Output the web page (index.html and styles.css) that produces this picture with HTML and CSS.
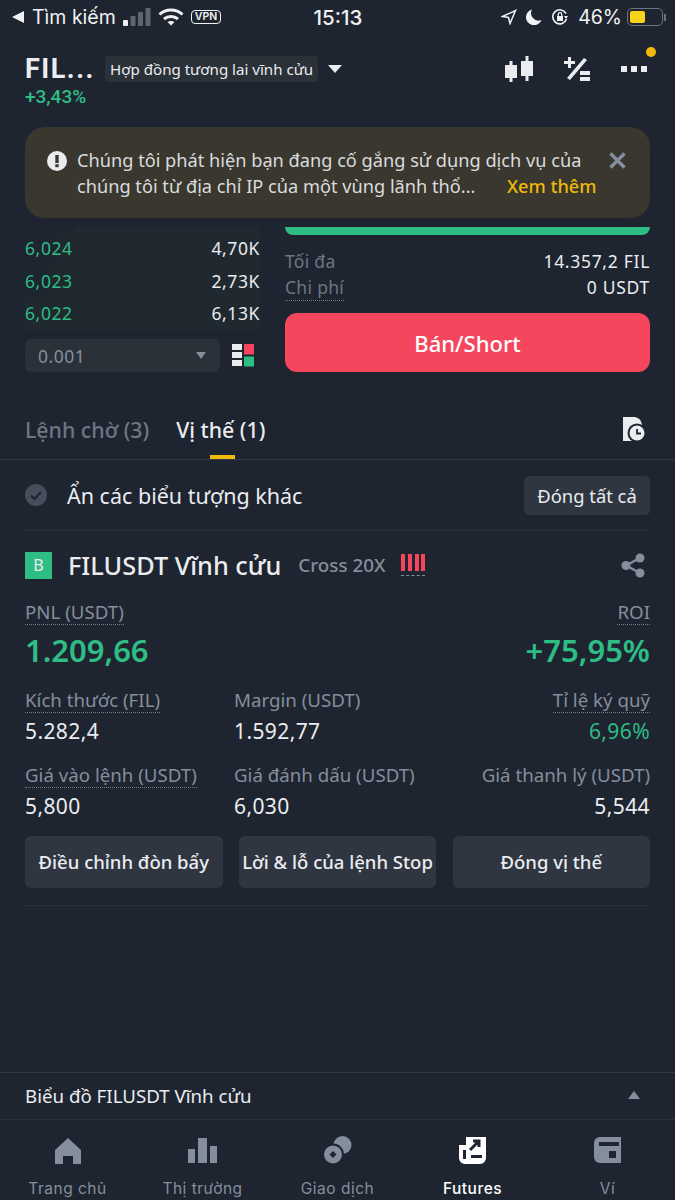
FILE: index.html
```html
<!DOCTYPE html>
<html lang="vi">
<head>
  <meta charset="UTF-8">
  <meta name="viewport" content="width=device-width, initial-scale=1.0">
  <title>Futures</title>
  <link rel="stylesheet" href="styles.css">
</head>
<body>
  <div class="app">
    <!-- status bar -->
    <div class="status-bar">
      <div class="status-left">
        <svg class="back-tri" width="13" height="12" viewBox="0 0 13 12"><path d="M0 6L12 0V12Z" fill="#f0f1f3"/></svg>
        <span>Tìm kiếm</span>
        <svg class="signal" width="28" height="18" viewBox="0 0 28 18">
          <rect x="0" y="12" width="5" height="6" rx="1" fill="#f0f1f3"/>
          <rect x="7.500" y="8" width="5" height="10" rx="1" fill="#5f6570"/>
          <rect x="15" y="4" width="5" height="14" rx="1" fill="#5f6570"/>
          <rect x="22.500" y="0" width="5" height="18" rx="1" fill="#5f6570"/>
        </svg>
        <svg class="wifi" width="26" height="18" viewBox="0 0 26 18" fill="none" stroke="#f0f1f3" stroke-width="3">
          <path d="M1.500 6.500C8 .5 18 .5 24.500 6.500"/>
          <path d="M6 11c4-3.500 10-3.500 14 0"/>
          <path d="M13 17.500L9.500 14c2-1.500 5-1.500 7 0Z" fill="#f0f1f3" stroke="none"/>
        </svg>
        <span class="vpn">VPN</span>
      </div>
      <div class="status-time">15:13</div>
      <div class="status-right">
        <svg width="16" height="16" viewBox="0 0 16 16" fill="none" stroke="#f0f1f3" stroke-width="1.500"><path d="M1.500 7.500L14.500 1.500L9 14.500L7.500 8.500Z"/></svg>
        <svg class="moon" width="16" height="16" viewBox="0 0 16 16"><path d="M6 0.500A8 8 0 1 0 15.500 11A7.500 7.500 0 0 1 6 0.500Z" fill="#f0f1f3"/></svg>
        <svg width="18" height="18" viewBox="0 0 18 18" fill="none" stroke="#f0f1f3" stroke-width="1.600">
          <path d="M15.500 11A7 7 0 1 1 15 5.500"/>
          <path d="M13 8h4l-2 3Z" fill="#f0f1f3" stroke="none"/>
          <rect x="6" y="8" width="6" height="5" fill="#f0f1f3" stroke="none"/>
          <path d="M7.200 8V6.500a1.800 1.800 0 0 1 3.600 0V8" stroke-width="1.200"/>
        </svg>
        <span class="batt-text">46%</span>
        <div class="battery"><div class="battery-fill"></div></div>
        <div class="battery-cap"></div>
      </div>
    </div>

    <!-- top bar -->
    <div class="top-bar">
      <div class="top-left">
        <div class="title-row">
          <span class="symbol">FIL...</span>
          <span class="contract-tag">Hợp đồng tương lai vĩnh cửu</span>
          <span class="caret-down"></span>
        </div>
        <div class="change">+3,43%</div>
      </div>
      <div class="top-icons">
        <svg width="28" height="26" viewBox="0 0 28 26" fill="#eaecef">
          <rect x="0" y="9" width="12" height="13"/><rect x="4.500" y="5" width="3" height="21"/>
          <rect x="16" y="5" width="12" height="15"/><rect x="20.500" y="0" width="3" height="25"/>
        </svg>
        <svg width="26" height="26" viewBox="0 0 26 26" fill="#eaecef">
          <path d="M4 1h3v4h4v3H7v4H4V8H0V5h4Z"/>
          <path d="M20 2l3 2L6 24l-3-2Z"/>
          <rect x="16" y="15" width="10" height="4"/><rect x="16" y="21" width="10" height="4"/>
        </svg>
        <div class="more">
          <span class="dot-yellow"></span>
          <span class="sq"></span><span class="sq"></span><span class="sq"></span>
        </div>
      </div>
    </div>

    <!-- part of the order form that shows below the notice -->
    <div class="trade-area">
      <div class="notice">
        <svg class="notice-icon" width="20" height="20" viewBox="0 0 20 20">
          <circle cx="10" cy="10" r="10" fill="#eaecef"/>
          <rect x="8.300" y="4" width="3.400" height="8" fill="#3a372e"/>
          <rect x="8.300" y="13.200" width="3.400" height="3" fill="#3a372e"/>
        </svg>
        <div class="notice-text">
          <div>Chúng tôi phát hiện bạn đang cố gắng sử dụng dịch vụ của</div>
          <div class="notice-line2">chúng tôi từ địa chỉ IP của một vùng lãnh thổ...<a class="more-link">Xem thêm</a></div>
        </div>
        <svg class="notice-close" width="17" height="17" viewBox="0 0 17 17" stroke="#848e9c" stroke-width="3.400"><path d="M1.500 1.500L15.500 15.500M15.500 1.500L1.500 15.500"/></svg>
      </div>

      <div class="trade-cols">
        <div class="book">
          <div class="book-rows">
            <div class="book-row d1"><span class="price">6,024</span><span class="qty">4,70K</span></div>
            <div class="book-row d2"><span class="price">6,023</span><span class="qty">2,73K</span></div>
            <div class="book-row d3"><span class="price">6,022</span><span class="qty">6,13K</span></div>
          </div>
          <div class="book-controls">
            <div class="step-select"><span>0.001</span><span class="caret-small"></span></div>
            <svg class="layout-icon" width="23" height="23" viewBox="0 0 23 23">
              <rect x="0" y="0" width="10" height="6" fill="#eaecef"/>
              <rect x="0" y="8" width="10" height="6" fill="#eaecef"/>
              <rect x="0" y="16" width="10" height="6" fill="#eaecef"/>
              <rect x="12" y="0" width="10" height="10.500" fill="#f6465d"/>
              <rect x="12" y="12.500" width="10" height="10" fill="#2ebd85"/>
            </svg>
          </div>
        </div>
        <div class="order">
          <div class="buy-sliver"></div>
          <div class="order-line first"><span class="order-label">Tối đa</span><span class="order-val">14.357,2 FIL</span></div>
          <div class="order-line"><span class="order-label dashed">Chi phí</span><span class="order-val">0 USDT</span></div>
          <button class="sell-btn">Bán/Short</button>
        </div>
      </div>
    </div>

    <!-- tabs -->
    <div class="tabs">
      <span class="tab">Lệnh chờ (3)</span>
      <span class="tab active">Vị thế (1)</span>
      <svg class="history-icon" width="23" height="25" viewBox="0 0 23 25">
        <path d="M0 0H12Q18 1 19 8V24H0Z" fill="#eaecef"/>
        <circle cx="14" cy="16" r="9.500" fill="#1e2530"/>
        <circle cx="14" cy="16" r="7.500" fill="#eaecef"/>
        <path d="M14 12V16.500H18" fill="none" stroke="#1e2530" stroke-width="1.800"/>
      </svg>
    </div>

    <div class="content">
      <div class="filter-row">
        <div class="filter-left">
          <svg width="22" height="22" viewBox="0 0 22 22">
            <circle cx="11" cy="11" r="11" fill="#474d5a"/>
            <path d="M6 11.500L9.500 15L16 8" fill="none" stroke="#1e2530" stroke-width="2"/>
          </svg>
          <span>Ẩn các biểu tượng khác</span>
        </div>
        <button class="close-all">Đóng tất cả</button>
      </div>

      <div class="position">
        <div class="pos-head">
          <span class="side-badge">B</span>
          <span class="pos-name">FILUSDT Vĩnh cửu</span>
          <span class="pos-lev">Cross 20X</span>
          <div class="risk">
            <div class="risk-bars"><i></i><i></i><i></i><i></i></div>
            <div class="risk-dash"></div>
          </div>
          <svg class="share" width="24" height="25" viewBox="0 0 24 25" fill="#848e9c">
            <circle cx="5" cy="12.500" r="4.500"/><circle cx="19" cy="5" r="4.500"/><circle cx="19" cy="20" r="4.500"/>
            <path d="M5 12.500L19 5M5 12.500L19 20" stroke="#848e9c" stroke-width="2.500"/>
          </svg>
        </div>

        <div class="pnl-row">
          <div>
            <div class="label"><span class="dashed">PNL (USDT)</span></div>
            <div class="pnl-val">1.209,66</div>
          </div>
          <div class="right">
            <div class="label"><span class="dashed">ROI</span></div>
            <div class="pnl-val">+75,95%</div>
          </div>
        </div>

        <div class="stat-grid">
          <div class="stat">
            <div class="label"><span class="dashed">Kích thước (FIL)</span></div>
            <div class="val">5.282,4</div>
          </div>
          <div class="stat">
            <div class="label">Margin (USDT)</div>
            <div class="val">1.592,77</div>
          </div>
          <div class="stat right">
            <div class="label"><span class="dashed">Tỉ lệ ký quỹ</span></div>
            <div class="val green">6,96%</div>
          </div>
          <div class="stat">
            <div class="label"><span class="dashed">Giá vào lệnh (USDT)</span></div>
            <div class="val">5,800</div>
          </div>
          <div class="stat">
            <div class="label">Giá đánh dấu (USDT)</div>
            <div class="val">6,030</div>
          </div>
          <div class="stat right">
            <div class="label">Giá thanh lý (USDT)</div>
            <div class="val">5,544</div>
          </div>
        </div>

        <div class="pos-actions">
          <button>Điều chỉnh đòn bẩy</button>
          <button>Lời &amp; lỗ của lệnh Stop</button>
          <button>Đóng vị thế</button>
        </div>
      </div>
    </div>

    <!-- chart drawer + nav -->
    <div class="chart-bar">
      <span>Biểu đồ FILUSDT Vĩnh cửu</span>
      <span class="caret-up"></span>
    </div>
    <div class="tab-bar">
      <div class="nav-item">
        <svg width="28" height="28" viewBox="0 0 28 28" fill="#848e9c"><path d="M14 2L27 14V28H19V20H9V28H1V14Z"/></svg>
        <span>Trang chủ</span>
      </div>
      <div class="nav-item">
        <svg width="30" height="28" viewBox="0 0 30 28" fill="#848e9c"><rect x="0" y="13" width="7" height="14"/><rect x="10" y="2" width="9" height="25"/><rect x="22" y="10" width="7" height="17"/></svg>
        <span>Thị trường</span>
      </div>
      <div class="nav-item">
        <svg width="30" height="28" viewBox="0 0 30 28">
          <circle cx="19.500" cy="9" r="9" fill="#848e9c"/>
          <circle cx="10" cy="18.500" r="11" fill="#1e2530"/>
          <circle cx="10" cy="18.500" r="9" fill="#848e9c"/>
          <rect x="7.500" y="16" width="5" height="5" transform="rotate(45 10 18.500)" fill="#1e2530"/>
        </svg>
        <span>Giao dịch</span>
      </div>
      <div class="nav-item active">
        <svg width="28" height="28" viewBox="0 0 28 28">
          <path d="M7 1H27V22A6 6 0 0 1 21 28H6A6 6 0 0 1 0 22V9H7Z" fill="#fff"/>
          <path d="M11 14L19 6M14 5H20V11" fill="none" stroke="#1e2530" stroke-width="3"/>
          <rect x="4" y="14" width="3" height="9" fill="#1e2530"/>
          <rect x="12" y="19" width="11" height="3" fill="#1e2530"/>
        </svg>
        <span>Futures</span>
      </div>
      <div class="nav-item">
        <svg width="28" height="28" viewBox="0 0 28 28">
          <path d="M6 1H27V27H6A6 6 0 0 1 0 21V7A6 6 0 0 1 6 1Z" fill="#848e9c"/>
          <rect x="5" y="6" width="20" height="4" fill="#1e2530"/>
          <rect x="15" y="15" width="7" height="7" fill="#1e2530"/>
        </svg>
        <span>Ví</span>
      </div>
    </div>
  </div>
</body>
</html>
```
FILE: styles.css
```css
* {
  box-sizing: border-box;
}

body {
  margin: 0;
  font-family: "Noto Sans", "Open Sans", sans-serif;
  background-color: #1e2530;
  color: #eaecef;
}

button {
  font-family: inherit;
  border: none;
}

.app {
  width: 675px;
  height: 1200px;
  display: flex;
  flex-direction: column;
  overflow: hidden;
  background-color: #1e2530;
}

/* status bar */
.status-bar {
  height: 34px;
  padding: 0 9px 0 12px;
  display: flex;
  align-items: center;
  justify-content: space-between;
  font-family: Inter, sans-serif;
  font-size: 19.500px;
  color: #f0f1f3;
}

.status-left {
  width: 300px;
  display: flex;
  align-items: center;
  gap: 7px;
}

.vpn {
  border: 1.500px solid #f0f1f3;
  border-radius: 4px;
  font-size: 10.500px;
  font-weight: 600;
  padding: 0 3px;
  line-height: 12px;
}

.status-time {
  margin-right: 2px;
  font-weight: 500;
  font-size: 20.500px;
}

.status-right {
  width: 300px;
  display: flex;
  align-items: center;
  justify-content: flex-end;
  gap: 9px;
}

.battery {
  width: 36px;
  height: 18px;
  margin-left: -4px;
  padding: 2px;
  border: 1.500px solid #6b7280;
  border-radius: 5px;
}

.battery-fill {
  width: 50%;
  height: 100%;
  background-color: #f7d31a;
  border-radius: 2px;
}

.battery-cap {
  width: 2px;
  height: 7px;
  margin-left: -8px;
  background-color: #6b7280;
}

/* top bar */
.top-bar {
  height: 92px;
  padding: 18px 28px 0 25px;
  display: flex;
  justify-content: space-between;
}

.title-row {
  display: flex;
  align-items: center;
}

.symbol {
  width: 80px;
  font-family: Roboto, sans-serif;
  font-size: 27px;
  font-weight: 700;
  line-height: 34px;
  letter-spacing: 1.500px;
  white-space: nowrap;
}

.contract-tag {
  background-color: #2b3139;
  border-radius: 3px;
  font-size: 15.100px;
  line-height: 26px;
  padding: 0 5px;
}

.caret-down {
  margin-left: 10px;
  border-left: 7px solid transparent;
  border-right: 7px solid transparent;
  border-top: 8px solid #eaecef;
}

.change {
  margin-top: 1px;
  font-family: Roboto, sans-serif;
  font-size: 19px;
  font-weight: 500;
  color: #2ebd85;
  line-height: 20px;
}

.top-icons {
  display: flex;
  align-items: center;
  gap: 31px;
  height: 34px;
}

.more {
  position: relative;
  display: flex;
  gap: 4px;
  width: 26px;
}

.sq {
  width: 6px;
  height: 6px;
  background-color: #eaecef;
}

.dot-yellow {
  position: absolute;
  top: -19px;
  right: -9px;
  width: 10px;
  height: 10px;
  border-radius: 50%;
  background-color: #f0b90b;
}

/* notice and order form */
.trade-area {
  padding: 0 25px;
  height: 272px;
}

.notice {
  position: relative;
  height: 91px;
  margin-top: 1px;
  padding: 20px 0 0 22px;
  display: flex;
  align-items: flex-start;
  background-color: #3a372e;
  border-radius: 20px;
  font-size: 18.200px;
  line-height: 26px;
}

.notice-icon {
  margin: 4px 10px 0 0;
  flex: none;
}

.notice-text {
  white-space: nowrap;
  color: #d9dbde;
}

.more-link {
  position: absolute;
  left: 482px;
  color: #f0b90b;
  font-weight: 500;
}

.notice-close {
  position: absolute;
  top: 25px;
  right: 24px;
}

.trade-cols {
  display: flex;
  justify-content: space-between;
  margin-top: 9px;
}

.book {
  width: 235px;
}

.book-rows {
  height: 103px;
  padding-top: 5px;
  background: linear-gradient(to left, #20292f 185px, #1e2530 0);
}

.book-row {
  height: 32.500px;
  display: flex;
  justify-content: space-between;
  align-items: center;
  font-size: 17.500px;
  letter-spacing: .6px;
}

/* depth bars behind the rows */
.d1 { background: linear-gradient(to left, #20292f 203px, #1e2530 0); }
.d2 { background: linear-gradient(to left, #20292f 213px, #1e2530 0); }
.d3 { background: #20292f; }

.price {
  color: #2ebd85;
}

.book-controls {
  margin-top: 9px;
  display: flex;
  align-items: center;
  justify-content: space-between;
}

.layout-icon {
  margin-right: 5px;
}

.step-select {
  width: 195px;
  height: 33px;
  padding: 0 14px 0 13px;
  display: flex;
  align-items: center;
  justify-content: space-between;
  background-color: #2b3139;
  border-radius: 6px;
  color: #848e9c;
  font-size: 17.500px;
  letter-spacing: .5px;
}

.caret-small {
  border-left: 5.500px solid transparent;
  border-right: 5.500px solid transparent;
  border-top: 7px solid #848e9c;
}

.order {
  width: 365px;
}

.buy-sliver {
  height: 8px;
  background-color: #2ebd85;
  border-radius: 0 0 10px 10px;
}

.order-line {
  display: flex;
  justify-content: space-between;
  align-items: flex-start;
  font-size: 17.500px;
  line-height: 26px;
  letter-spacing: .3px;
}

.order-val {
  letter-spacing: .7px;
}

.order-line.first {
  margin-top: 13px;
}

.order-label {
  color: #6e7684;
}

.dashed {
  border-bottom: 1px dotted #747c89;
}

.sell-btn {
  width: 100%;
  height: 59px;
  margin-top: 12px;
  border-radius: 12px;
  background-color: #f6465d;
  color: #fff;
  font-size: 22px;
  font-weight: 500;
}

/* tabs */
.tabs {
  height: 62px;
  padding: 17px 25px 0;
  display: flex;
  align-items: flex-start;
  gap: 27px;
  font-size: 21.300px;
  font-weight: 500;
  border-bottom: 1px solid #333a45;
}

.tab {
  color: #6e7684;
}

.tab.active {
  position: relative;
  height: 44px;
  color: #eaecef;
}

.tab.active::after {
  content: "";
  position: absolute;
  left: 34px;
  bottom: 0;
  width: 25px;
  height: 4px;
  background-color: #f0b90b;
}

.history-icon {
  margin-left: auto;
  margin-right: 4px;
  margin-top: 2px;
}

/* positions */
.content {
  flex: 1;
  padding: 0 25px;
}

.filter-row {
  height: 71px;
  display: flex;
  align-items: center;
  justify-content: space-between;
  border-bottom: 1px solid #2b3139;
}

.filter-left {
  display: flex;
  align-items: center;
  gap: 20px;
  font-size: 21.500px;
}

.close-all {
  height: 39px;
  width: 126px;
  border-radius: 5px;
  background-color: #2f3642;
  color: #eaecef;
  font-size: 18.400px;
}

.position {
  height: 375px;
  border-bottom: 1px solid #2b3139;
}

.pos-head {
  height: 68px;
  display: flex;
  align-items: center;
}

.side-badge {
  width: 27px;
  height: 27px;
  display: flex;
  align-items: center;
  justify-content: center;
  background-color: #2ebd85;
  color: #eaecef;
  font-size: 16px;
}

.pos-name {
  margin-left: 16px;
  font-size: 25.300px;
  font-weight: 500;
}

.pos-lev {
  margin-left: 17px;
  color: #848e9c;
  font-size: 18.800px;
  font-weight: 500;
}

.risk {
  margin-left: 16px;
}

.risk-bars {
  display: flex;
  gap: 2.600px;
}

.risk-bars i {
  width: 4px;
  height: 17px;
  background-color: #f6465d;
}

.risk-dash {
  margin-top: 4px;
  border-bottom: 1px dashed #848e9c;
}

.share {
  margin-left: auto;
  margin-right: 5px;
}

.label {
  color: #848e9c;
  font-size: 18.700px;
  line-height: 24px;
}

.right {
  text-align: right;
}

.pnl-row {
  display: flex;
  justify-content: space-between;
  margin-top: 1px;
}

.pnl-val {
  margin-top: 7px;
  color: #2ebd85;
  font-size: 31px;
  font-weight: 600;
  line-height: 38px;
}

.stat-grid {
  margin-top: 19px;
  display: grid;
  grid-template-columns: 209px 1fr auto;
  row-gap: 17px;
}

.val {
  margin-top: 4px;
  font-size: 21px;
  line-height: 30px;
  letter-spacing: .4px;
}

.val.green {
  color: #2ebd85;
}

.pos-actions {
  margin-top: 15px;
  display: flex;
  justify-content: space-between;
}

.pos-actions button {
  width: 197.500px;
  height: 52px;
  padding: 0 0 2px;
  border-radius: 6px;
  background-color: #2f3642;
  color: #eaecef;
  font-size: 18.500px;
  font-weight: 500;
}

/* bottom */
.chart-bar {
  height: 48px;
  padding: 0 35px 2px 25px;
  display: flex;
  align-items: center;
  justify-content: space-between;
  border-top: 1px solid #333a45;
  border-bottom: 1px solid #2b3139;
  font-size: 18.700px;
}

.caret-up {
  border-left: 6px solid transparent;
  border-right: 6px solid transparent;
  border-bottom: 8px solid #848e9c;
}

.tab-bar {
  height: 80px;
  padding: 16px 0 0;
  display: grid;
  grid-template-columns: repeat(5, 135px);
}

.nav-item {
  display: flex;
  flex-direction: column;
  align-items: center;
  gap: 15px;
  color: #848e9c;
  font-family: Inter, sans-serif;
  font-size: 15.500px;
  letter-spacing: .5px;
}

.nav-item.active {
  color: #fff;
  font-weight: 500;
}
```
